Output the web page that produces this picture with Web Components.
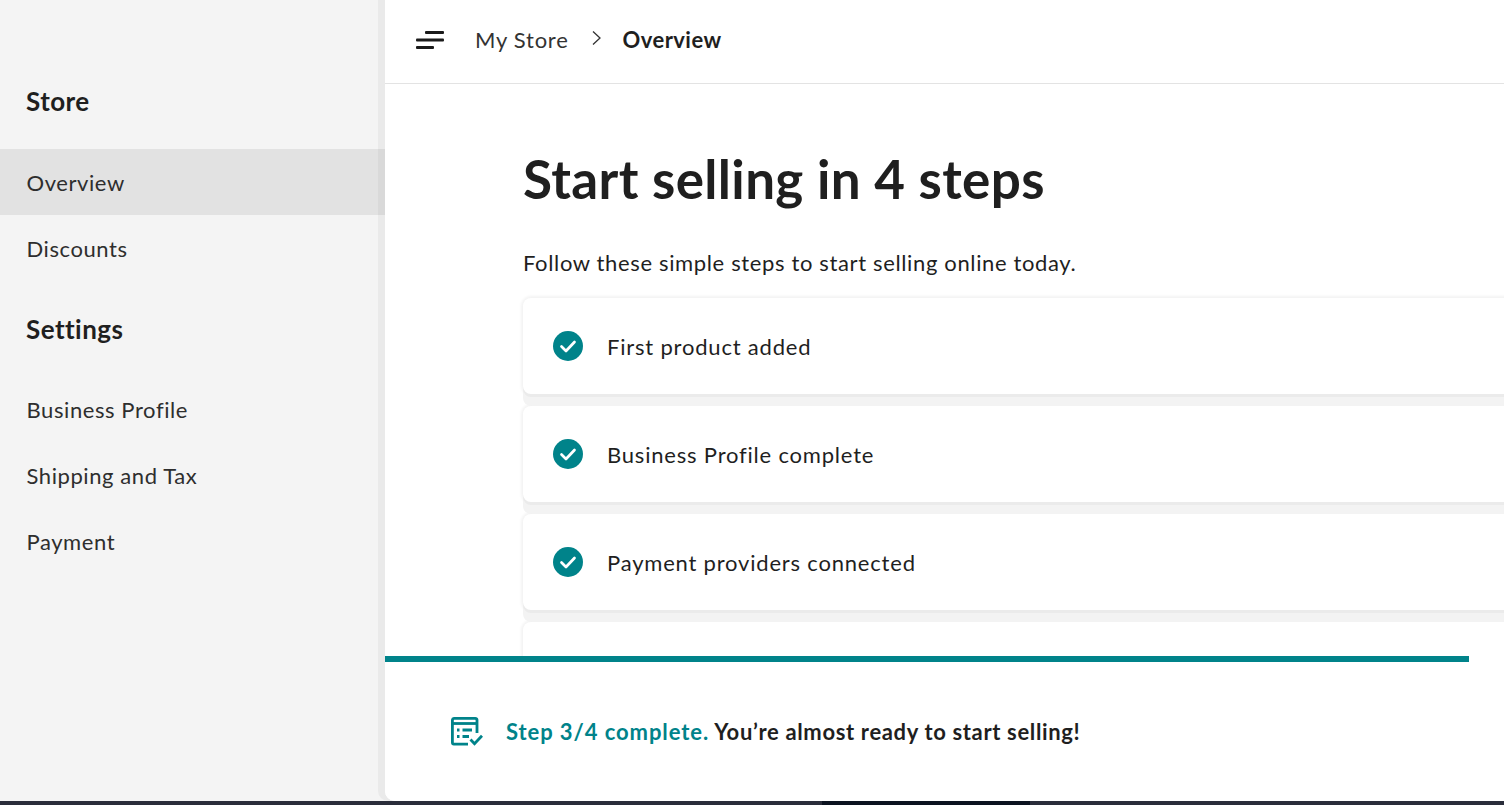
<!DOCTYPE html>
<html lang="en">
<head>
<meta charset="utf-8">
<title>Overview</title>
<style>
  html, body { margin: 0; height: 100%; overflow: hidden; background: #2a2d3a; }
  body { font-family: "Lato", "Open Sans", sans-serif; color: #1f1f1f; }
</style>
</head>
<body>
<store-app>
  <store-sidebar slot="side">
    <nav-heading>Store</nav-heading>
    <nav-item active>Overview</nav-item>
    <nav-item>Discounts</nav-item>
    <nav-heading settings>Settings</nav-heading>
    <nav-item>Business Profile</nav-item>
    <nav-item>Shipping and Tax</nav-item>
    <nav-item>Payment</nav-item>
  </store-sidebar>
  <store-topbar slot="top"></store-topbar>
  <step-card done>First product added</step-card>
  <step-card done>Business Profile complete</step-card>
  <step-card done>Payment providers connected</step-card>
  <step-card></step-card>
  <progress-footer slot="foot"></progress-footer>
</store-app>

<script>
// page frame: sidebar on the left, topbar / content / footer on the right
class StoreApp extends HTMLElement {
  constructor() {
    super();
    this.attachShadow({ mode: 'open' });
    this.shadowRoot.innerHTML = `
      <style>
        :host { display: flex; flex-direction: column; height: 805px; }
        .frame { display: flex; height: 801px; background: #f4f4f4; }
        .main {
          flex: 1; min-width: 0; display: flex; flex-direction: column;
          background: #fff; border-bottom-left-radius: 10px;
          box-shadow: -7px 0 0 rgba(0,0,0,.04); position: relative;
        }
        .content { flex: 1; min-height: 0; overflow: hidden; padding: 0 0 0 138px; }
        h1 { margin: 60px 0 0; font-size: 53px; line-height: 70px; font-weight: 700; letter-spacing: .35px; color: #1f1f1f; }
        p { margin: 34px 0 0; font-size: 22px; line-height: 30px; letter-spacing: .64px; color: #1f1f1f; }
        .steps { display: flex; flex-direction: column; gap: 12px; margin: 20px -30px 0 0; }
        .strip { height: 4px; display: flex; background: #2a2d3a; }
        .strip i { margin-left: 822px; width: 208px; background: #0b1220; }
      </style>
      <div class="frame">
        <slot name="side"></slot>
        <div class="main">
          <slot name="top"></slot>
          <div class="content">
            <h1>Start selling in 4 steps</h1>
            <p>Follow these simple steps to start selling online today.</p>
            <div class="steps"><slot></slot></div>
          </div>
          <slot name="foot"></slot>
        </div>
      </div>
      <div class="strip"><i></i></div>
    `;
  }
}

class StoreSidebar extends HTMLElement {
  constructor() {
    super();
    this.attachShadow({ mode: 'open' });
    this.shadowRoot.innerHTML = `
      <style>
        :host { display: flex; flex-direction: column; width: 385px; flex: none; padding-top: 83px; box-sizing: border-box; }
      </style>
      <slot></slot>
    `;
  }
}

class NavHeading extends HTMLElement {
  constructor() {
    super();
    this.attachShadow({ mode: 'open' });
    this.shadowRoot.innerHTML = `
      <style>
        :host { display: flex; align-items: center; height: 36px; padding: 0 0 30px 26px; font-size: 26px; font-weight: 700; letter-spacing: .45px; color: #1f1f1f; }
        :host([settings]) { height: 94px; padding: 1px 0 0 26px; }
      </style>
      <slot></slot>
    `;
  }
}

class NavItem extends HTMLElement {
  constructor() {
    super();
    this.attachShadow({ mode: 'open' });
    this.shadowRoot.innerHTML = `
      <style>
        :host { display: flex; align-items: center; height: 66px; padding-left: 26.500px; font-size: 22px; letter-spacing: .58px; color: #2e2e2e; }
        :host([active]) { background: #e2e2e2; }
      </style>
      <slot></slot>
    `;
  }
}

class StoreTopbar extends HTMLElement {
  constructor() {
    super();
    this.attachShadow({ mode: 'open' });
    this.shadowRoot.innerHTML = `
      <style>
        :host { display: flex; align-items: center; height: 84px; box-sizing: border-box; flex: none; border-bottom: 1px solid #e3e3e3; background: #fff; padding: 0 0 4px 31px; font-size: 22px; position: relative; }
        svg { display: block; flex: none; }
        .menu { margin-right: 31px; }
        .crumb { color: #333; letter-spacing: .75px; }
        .sep { margin: 0 22px 4px 23px; }
        b { font-weight: 700; color: #1f1f1f; letter-spacing: .45px; }
      </style>
      <svg class="menu" width="28" height="18" viewBox="0 0 28 18" fill="#1a1a1a">
        <rect x="9" y="0" width="19" height="3" rx="1"/>
        <rect x="0" y="7.5" width="28" height="3" rx="1"/>
        <rect x="0" y="15" width="18" height="3" rx="1"/>
      </svg>
      <span class="crumb">My Store</span>
      <svg class="sep" width="9" height="14" viewBox="0 0 9 14" fill="none" stroke="#333" stroke-width="1.3"><path d="M1 .5 8 7 1 13.5"/></svg>
      <b>Overview</b>
    `;
  }
}

class StepCard extends HTMLElement {
  constructor() {
    super();
    this.attachShadow({ mode: 'open' });
    const check = this.hasAttribute('done') ? `
      <svg width="30" height="30" viewBox="0 0 30 30">
        <circle cx="15" cy="15" r="15" fill="#00838a"/>
        <path d="M8.500 15.500 13 20 21.500 11" fill="none" stroke="#fff" stroke-width="2.700" stroke-linecap="round" stroke-linejoin="round"/>
      </svg>` : '';
    this.shadowRoot.innerHTML = `
      <style>
        :host {
          display: flex; align-items: center; gap: 24px; height: 96px; flex: none; box-sizing: border-box;
          padding-left: 30px; background: #fff; border-radius: 8px;
          font-size: 22px; letter-spacing: .8px; color: #1f1f1f;
          box-shadow: 0 3px 0 #ebebeb, 0 12px 0 #f3f3f3, 0 0 3px 2px #f3f3f3;
        }
        svg { display: block; flex: none; }
      </style>
      ${check}
      <span><slot></slot></span>
    `;
  }
}

class ProgressFooter extends HTMLElement {
  constructor() {
    super();
    this.attachShadow({ mode: 'open' });
    this.shadowRoot.innerHTML = `
      <style>
        :host { display: block; height: 145px; flex: none; background: #fff; border-bottom-left-radius: 10px; position: relative; }
        .bar { height: 6px; width: 1084px; background: #00838a; }
        .row { display: flex; align-items: center; gap: 23px; height: 139px; padding: 0 0 0 66px; box-sizing: border-box; font-size: 22px; font-weight: 700; color: #1f1f1f; letter-spacing: .65px; }
        svg { display: block; flex: none; }
        em { font-style: normal; color: #00838a; letter-spacing: .92px; }
      </style>
      <div class="bar"></div>
      <div class="row">
        <svg width="32" height="30" viewBox="0 0 32 30" fill="none" stroke="#00838a" stroke-width="2.800">
          <path d="M17 27.200H3A1.800 1.800 0 0 1 1.400 25.400V3A1.800 1.800 0 0 1 3 1.400h21.200A1.800 1.800 0 0 1 26 3V16"/>
          <path d="M1.400 6.500h24.600"/>
          <path d="M6 13h2.500M6 19.500h2.500M11.500 13H21M11.500 19.500H18"/>
          <path d="M19.500 22.500l4 4.200 7.500-8"/>
        </svg>
        <span><em>Step 3/4 complete.</em> You’re almost ready to start selling!</span>
      </div>
    `;
  }
}

customElements.define('store-app', StoreApp);
customElements.define('store-sidebar', StoreSidebar);
customElements.define('nav-heading', NavHeading);
customElements.define('nav-item', NavItem);
customElements.define('store-topbar', StoreTopbar);
customElements.define('step-card', StepCard);
customElements.define('progress-footer', ProgressFooter);
</script>
</body>
</html>
